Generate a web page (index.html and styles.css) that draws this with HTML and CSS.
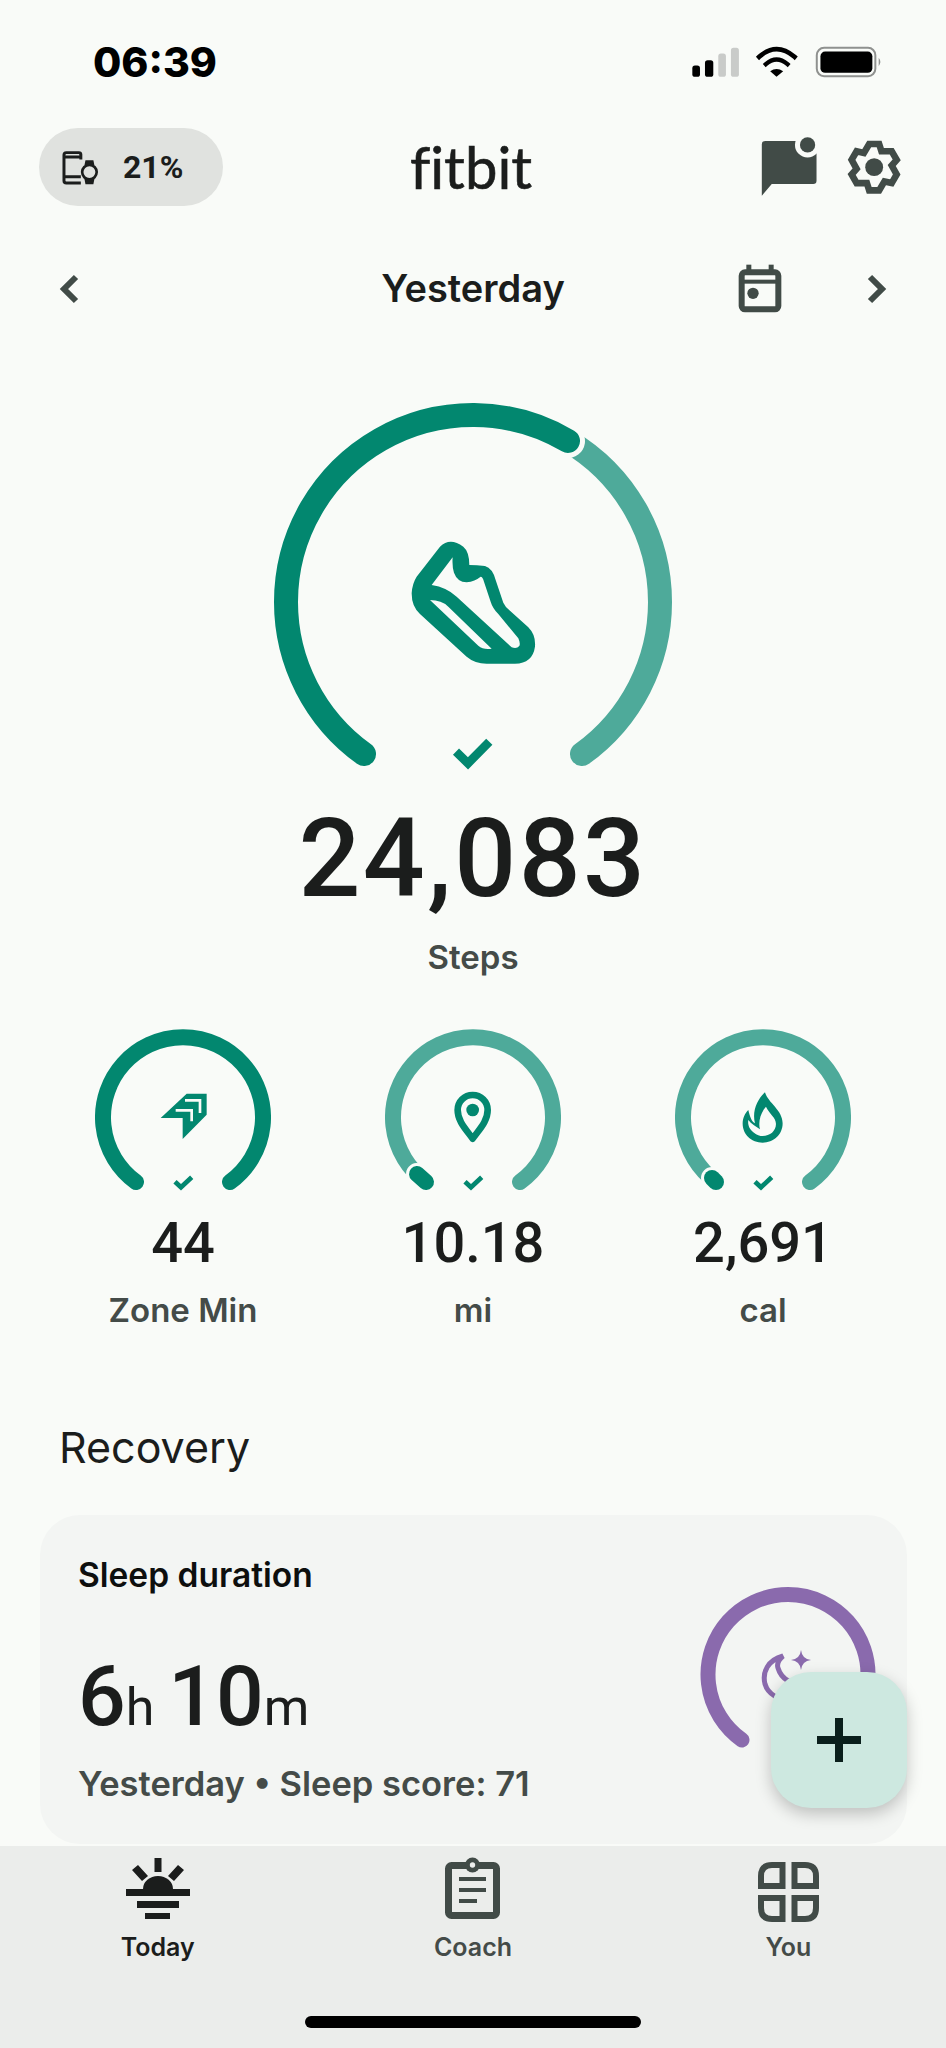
FILE: index.html
```html
<!DOCTYPE html>
<html lang="en">

<head>
    <meta charset="UTF-8">
    <title>Fitbit Today</title>
    <link rel="stylesheet" href="styles.css">
</head>

<body>
    <div class="phone">
        <div class="status">
            <span class="time">06:39</span>
            <svg class="status-icons" viewBox="30 20 580 95" width="193" height="32">
                <rect x="37" y="78" width="23" height="34" rx="8" fill="#000" />
                <rect x="75" y="62" width="25" height="50" rx="8" fill="#000" />
                <rect x="115" y="42" width="23" height="70" rx="8" fill="#c9cbc9" />
                <rect x="153" y="25" width="24" height="87" rx="8" fill="#c9cbc9" />
                <path d="M238 52 Q290 6 344 52" fill="none" stroke="#000" stroke-width="14" stroke-linecap="square" />
                <path d="M258 74 Q290 46 323 74" fill="none" stroke="#000" stroke-width="13" stroke-linecap="square" />
                <path d="M290 112 L271 95 Q290 82 310 95 Z" fill="#000" />
                <rect x="411" y="25" width="176" height="85" rx="22" fill="none" stroke="#8f918f" stroke-width="6" />
                <rect x="422" y="36" width="156" height="64" rx="14" fill="#000" />
                <path d="M597 55 Q607 66 597 80 Z" fill="#8f918f" />
            </svg>
        </div>

        <header class="topbar">
            <div class="battery-pill">
                <svg viewBox="30 55 125 115" width="42" height="38">
                    <path d="M92 90 V75 Q92 69 86 69 H48 Q41 69 41 76 V154 Q41 161 48 161 H92 M41 142 H92 M41 82 H92" class="line-dark" stroke-width="9" />
                    <circle cx="118" cy="128" r="22" class="line-dark" stroke-width="8" />
                    <path d="M106 92 H130 L133 107 H103 Z M103 149 H133 L130 165 H106 Z" fill="#1b1d1c" />
                </svg>
                <span>21%</span>
            </div>
            <div class="logo">fitbit</div>
            <div class="top-actions">
                <svg viewBox="90 20 180 190" width="60" height="63">
                    <path d="M105 35 H250 Q260 35 260 45 V155 Q260 165 250 165 H125 L95 200 V45 Q95 35 105 35 Z" class="solid" />
                    <circle cx="233" cy="47" r="38" fill="#f9fbf8" />
                    <circle cx="233" cy="47" r="23" class="solid" />
                </svg>
                <svg viewBox="345 25 175 175" width="58" height="58">
                    <g transform="translate(433 113)">
                        <polygon points="-15,-70 15,-70 22,-48 53,-48 68,-22 53,-5 68,22 53,48 31,43 15,70 -15,70 -22,48 -53,48 -68,22 -53,5 -68,-22 -53,-48 -31,-43" class="line" stroke-width="20" />
                        <circle r="27" class="solid" />
                    </g>
                </svg>
            </div>
        </header>

        <div class="datebar">
            <svg class="chevron flip" viewBox="0 0 20 30" width="20" height="30"><path d="M3 3 L15 15 L3 27" class="line" stroke-width="6" /></svg>
            <div class="date-title">Yesterday</div>
            <div class="date-right">
                <svg viewBox="25 400 138 153" width="46" height="51">
                    <rect x="39" y="428" width="110" height="111" rx="10" class="line" stroke-width="18" />
                    <rect x="53" y="405" width="15" height="20" class="solid" />
                    <rect x="120" y="405" width="15" height="20" class="solid" />
                    <rect x="39" y="450" width="110" height="12" class="solid" />
                    <circle cx="73" cy="491" r="17" class="solid" />
                </svg>
                <svg class="chevron" viewBox="0 0 20 30" width="20" height="30"><path d="M3 3 L15 15 L3 27" class="line" stroke-width="6" /></svg>
            </div>
        </div>

        <section class="steps">
            <svg class="steps-ring" viewBox="0 0 400 373" width="400" height="373">
                <path d="M295 39 A187 187 0 0 1 387 200 A187 187 0 0 1 309 352" class="arc-light arc-round" stroke-width="24" />
                <path d="M91 352 A187 187 0 0 1 13 200 A187 187 0 0 1 295 39" class="arc-gap" stroke-width="34" />
                <path d="M91 352 A187 187 0 0 1 13 200 A187 187 0 0 1 295 39" class="arc-dark" stroke-width="24" />
                <g transform="translate(-23 -22) scale(.3333)">
                    <path fill-rule="evenodd" class="teal" d="M570 500 Q600 470 640 500 Q658 515 658 555 Q680 555 705 558 Q728 565 737 600 L760 668 Q765 680 780 692 L835 742 Q858 765 855 800 Q848 850 795 851 L710 851 Q675 851 650 830 L510 702 Q485 680 485 640 Q487 610 500 590 Z M608 532 Q606 560 612 578 Q622 606 650 607 Q675 604 692 590 Q698 590 702 605 L722 665 Q728 685 745 702 L805 775 Q812 790 808 798 Q800 808 785 802 L620 650 Q590 622 545 615 Z M540 660 Q575 660 595 680 L725 806 Q700 810 685 797 Z" />
                </g>
                <path d="M183 349.7 L195 361.3 L216.3 339.7" class="check" stroke-width="8.7" />
            </svg>
            <div class="steps-count">24,083</div>
            <div class="steps-label">Steps</div>
        </section>

        <section class="stats">
            <div class="stat">
                <svg viewBox="0 0 176 170" width="176" height="170">
                    <path d="M41 153 A80 80 0 1 1 135 153" class="arc-dark" stroke-width="16" />
                    <g transform="translate(65 64) scale(.3333) translate(-60 -40)">
                        <polygon points="200,42 140,42 62,115 128,115 128,178 200,105" class="teal" />
                        <path d="M135 62 H180 V100 M107 92 H155 V125" fill="none" stroke="#f9fbf8" stroke-width="8" />
                    </g>
                    <path d="M80 152.7 L86 158.3 L96.7 148.3" class="check" stroke-width="4.7" />
                </svg>
                <div class="stat-value">44</div>
                <div class="stat-label">Zone Min</div>
            </div>
            <div class="stat">
                <svg viewBox="0 0 176 170" width="176" height="170">
                    <path d="M41 153 A80 80 0 1 1 135 153" class="arc-light arc-round" stroke-width="16" />
                    <path d="M41 153 L32 145" class="arc-gap" stroke-width="22" />
                    <path d="M41 153 L32 145" class="arc-dark" stroke-width="16" />
                    <g transform="translate(55 51) scale(.3333)">
                        <path d="M98 176 C80 150 53 125 53 90 A45 45 0 0 1 143 90 C143 125 116 150 98 176 Z" class="line-teal" stroke-width="20" />
                        <circle cx="98" cy="90" r="19" class="teal" />
                    </g>
                    <path d="M80 152.7 L86 158.3 L96.7 148.3" class="check" stroke-width="4.7" />
                </svg>
                <div class="stat-value">10.18</div>
                <div class="stat-label">mi</div>
            </div>
            <div class="stat">
                <svg viewBox="0 0 176 170" width="176" height="170">
                    <path d="M41 153 A80 80 0 1 1 135 153" class="arc-light arc-round" stroke-width="16" />
                    <path d="M41 153 L37 149" class="arc-gap" stroke-width="22" />
                    <path d="M41 153 L37 149" class="arc-dark" stroke-width="16" />
                    <g transform="translate(-235 51) scale(.3333)">
                        <path fill-rule="evenodd" class="teal" d="M975 37 C985 70 1028 90 1028 130 C1028 165 1000 188 968 188 C935 188 908 165 908 130 C908 115 915 100 925 90 C930 110 935 125 945 130 C935 90 955 55 975 37 Z M978 80 C962 98 954 125 960 148 L942 136 C934 130 928 124 925 120 C923 132 927 148 942 158 C950 165 960 168 968 168 C990 168 1008 153 1008 132 C1008 112 988 102 978 80 Z" />
                    </g>
                    <path d="M80 152.7 L86 158.3 L96.7 148.3" class="check" stroke-width="4.7" />
                </svg>
                <div class="stat-value">2,691</div>
                <div class="stat-label">cal</div>
            </div>
        </section>

        <h2 class="section-title">Recovery</h2>

        <section class="card">
            <div class="card-text">
                <div class="card-title">Sleep duration</div>
                <div class="duration">6<small>h</small> 10<small>m</small></div>
                <div class="card-sub">Yesterday • Sleep score: 71</div>
            </div>
            <svg class="sleep-ring" viewBox="0 0 176 170" width="176" height="170">
                <path d="M42 153 A80 80 0 1 1 134 153" class="arc-purple" stroke-width="15" />
                <path d="M83 69 C68 73 62 85 65 97 C68 107 78 113 93 113 L108 98 Q83 98 78 81 Q76 75 83 69 Z" fill="none" stroke="#8a6aad" stroke-width="5" />
                <path d="M101 63 Q102 72 111 73 Q102 74 101 83 Q100 74 91 73 Q100 72 101 63 Z" fill="#8a6aad" />
            </svg>
        </section>

        <div class="fab">
            <svg viewBox="0 0 44 44" width="44" height="44"><path d="M18 0 H26 V18 H44 V26 H26 V44 H18 V26 H0 V18 H18 Z" fill="#0a1f1c" /></svg>
        </div>

        <nav class="tabbar">
            <div class="tabs">
                <div class="tab tab-active">
                    <svg viewBox="0 0 66 66" width="66" height="66">
                        <rect x="1" y="33" width="64" height="7" />
                        <rect x="12" y="45" width="42" height="7" />
                        <rect x="20" y="57" width="25" height="6" />
                        <path d="M18 33 A15 13 0 0 1 48 33 Z" />
                        <rect x="29.5" y="2" width="7" height="14" />
                        <path d="M7 14 L13 9 L23 20 L17 25 Z M59 14 L53 9 L43 20 L49 25 Z" />
                    </svg>
                    <span>Today</span>
                </div>
                <div class="tab">
                    <svg viewBox="0 0 55 66" width="55" height="66">
                        <rect x="3.5" y="9.5" width="48" height="50" rx="3" class="line" stroke-width="7" />
                        <circle cx="27.5" cy="9" r="7.5" class="solid" />
                        <circle cx="27.5" cy="9" r="2.7" fill="#ebedeb" />
                        <path d="M14 21 H41 V25 H14 Z M14 32 H41 V36 H14 Z M14 43 H32 V47 H14 Z" class="solid" />
                    </svg>
                    <span>Coach</span>
                </div>
                <div class="tab">
                    <svg viewBox="0 0 61 66" width="61" height="66">
                        <path d="M24.5 9 H14 Q3 9 3 20 V30 H24.5 Z M36.5 9 H47 Q58 9 58 20 V30 H36.5 Z M3 42 H24.5 V63 H14 Q3 63 3 52 Z M36.5 42 H58 V52 Q58 63 47 63 H36.5 Z" class="line" stroke-width="6" />
                    </svg>
                    <span>You</span>
                </div>
            </div>
            <div class="home-indicator"></div>
        </nav>
    </div>
</body>

</html>
```

FILE: styles.css
```css
* {
    padding: 0px;
    margin: 0px;
    box-sizing: border-box;
}

body {
    width: 946px;
    height: 2048px;
    overflow: hidden;
    background-color: #f9fbf8;
    color: #1b1d1c;
    font-family: "Inter", "Liberation Sans", sans-serif;
}

svg {
    display: block;
}

.phone {
    position: relative;
    width: 946px;
    height: 2048px;
    display: flex;
    flex-direction: column;
    overflow: hidden;
}

.line {
    fill: none;
    stroke: #414b47;
}

.line-dark {
    fill: none;
    stroke: #1b1d1c;
}

.solid {
    fill: #414b47;
}

.teal {
    fill: #02876f;
}

.line-teal {
    fill: none;
    stroke: #02876f;
    stroke-linejoin: round;
}

.check {
    fill: none;
    stroke: #02876f;
}

.arc-dark,
.arc-gap,
.arc-light,
.arc-purple {
    fill: none;
    stroke-linecap: round;
}

.arc-dark {
    stroke: #02876f;
}

.arc-gap {
    stroke: #f9fbf8;
}

.arc-light {
    stroke: #4eaa9a;
    stroke-linecap: butt;
}

.arc-round {
    stroke-linecap: round;
}

.arc-purple {
    stroke: #8a6aad;
}

/* status bar */
.status {
    height: 128px;
    padding: 46px 63px 0 93px;
    display: flex;
    justify-content: space-between;
    align-items: flex-start;
}

.time {
    font-size: 41px;
    font-weight: 800;
    line-height: 32px;
    color: #000;
}

/* top bar */
.topbar {
    height: 78px;
    padding: 0 43px 0 39px;
    display: grid;
    grid-template-columns: 1fr auto 1fr;
    align-items: center;
}

.battery-pill {
    width: 184px;
    height: 78px;
    border-radius: 39px;
    background-color: #e0e2df;
    display: flex;
    align-items: center;
    gap: 21px;
    padding-left: 21px;
    font-family: "Roboto", sans-serif;
    font-size: 32px;
    font-weight: 700;
}

.logo {
    font-family: "Lato", sans-serif;
    font-size: 58px;
    line-height: 78px;
    font-variant-ligatures: none;
    -webkit-text-stroke: 0.6px #1b1d1c;
}

.top-actions {
    display: flex;
    justify-content: flex-end;
    align-items: center;
    gap: 25px;
}

/* date */
.datebar {
    height: 51px;
    margin-top: 57px;
    padding: 0 59px;
    display: grid;
    grid-template-columns: 1fr auto 1fr;
    align-items: center;
}

.flip {
    transform: scaleX(-1);
}

.date-title {
    margin-top: -2px;
    font-size: 38px;
    font-weight: 600;
}

.date-right {
    display: flex;
    justify-content: flex-end;
    align-items: center;
    gap: 84px;
}

/* steps */
.steps {
    margin-top: 88px;
    display: flex;
    flex-direction: column;
    align-items: center;
}

.steps-count {
    margin-top: 26px;
    font-family: "Roboto", sans-serif;
    font-size: 109px;
    font-weight: 500;
    letter-spacing: 2.5px;
    line-height: 116px;
}

.steps-label {
    margin-top: 20px;
    font-size: 33px;
    font-weight: 600;
    line-height: 40px;
    color: #444b48;
}

/* small rings */
.stats {
    margin-top: 52px;
    padding: 0 38px;
    display: grid;
    grid-template-columns: repeat(3, 290px);
}

.stat {
    display: flex;
    flex-direction: column;
    align-items: center;
}

.stat-value {
    margin-top: 11px;
    font-family: "Roboto", sans-serif;
    font-size: 56px;
    font-weight: 500;
    line-height: 66px;
}

.stat-label {
    margin-top: 14px;
    font-size: 33px;
    font-weight: 600;
    line-height: 40px;
    color: #444b48;
}

/* recovery */
.section-title {
    margin-top: 92px;
    padding-left: 59px;
    font-size: 43px;
    font-weight: 400;
    line-height: 50px;
}

.card {
    height: 329px;
    margin: 43px 39px 0 40px;
    padding: 72px 31px 0 38px;
    border-radius: 40px;
    background-color: #f3f5f3;
    display: flex;
    justify-content: space-between;
    align-items: flex-start;
}

.card-text {
    margin-top: -32px;
}

.card-title {
    font-size: 33.5px;
    font-weight: 600;
    line-height: 40px;
    color: #0d0f0e;
}

.duration {
    margin-top: 57px;
    font-family: "Roboto", sans-serif;
    font-size: 84px;
    font-weight: 500;
    line-height: 90px;
    word-spacing: -7px;
}

.duration small {
    font-size: 52px;
    font-weight: 400;
}

.card-sub {
    margin-top: 11px;
    font-size: 34.5px;
    font-weight: 600;
    line-height: 40px;
    color: #444b48;
}

.sleep-ring {
    flex-shrink: 0;
}

.fab {
    position: absolute;
    right: 39px;
    bottom: 240px;
    width: 136px;
    height: 136px;
    border-radius: 40px;
    background-color: #cde8e0;
    box-shadow: 0 6px 16px rgba(0, 0, 0, 0.22);
    display: flex;
    align-items: center;
    justify-content: center;
}

/* bottom tabs */
.tabbar {
    height: 202px;
    margin-top: 2px;
    padding-top: 10px;
    background-color: #ebedeb;
}

.tabs {
    display: grid;
    grid-template-columns: repeat(3, 1fr);
}

.tab {
    display: flex;
    flex-direction: column;
    align-items: center;
    font-size: 25px;
    font-weight: 600;
    line-height: 30px;
    color: #444b48;
}

.tab span {
    margin-top: 10px;
}

.tab-active {
    color: #1b1d1c;
}

.tab-active svg {
    fill: #1b1d1c;
}

.home-indicator {
    width: 336px;
    height: 12px;
    margin: 54px auto 0;
    border-radius: 6px;
    background-color: #000;
}
```
